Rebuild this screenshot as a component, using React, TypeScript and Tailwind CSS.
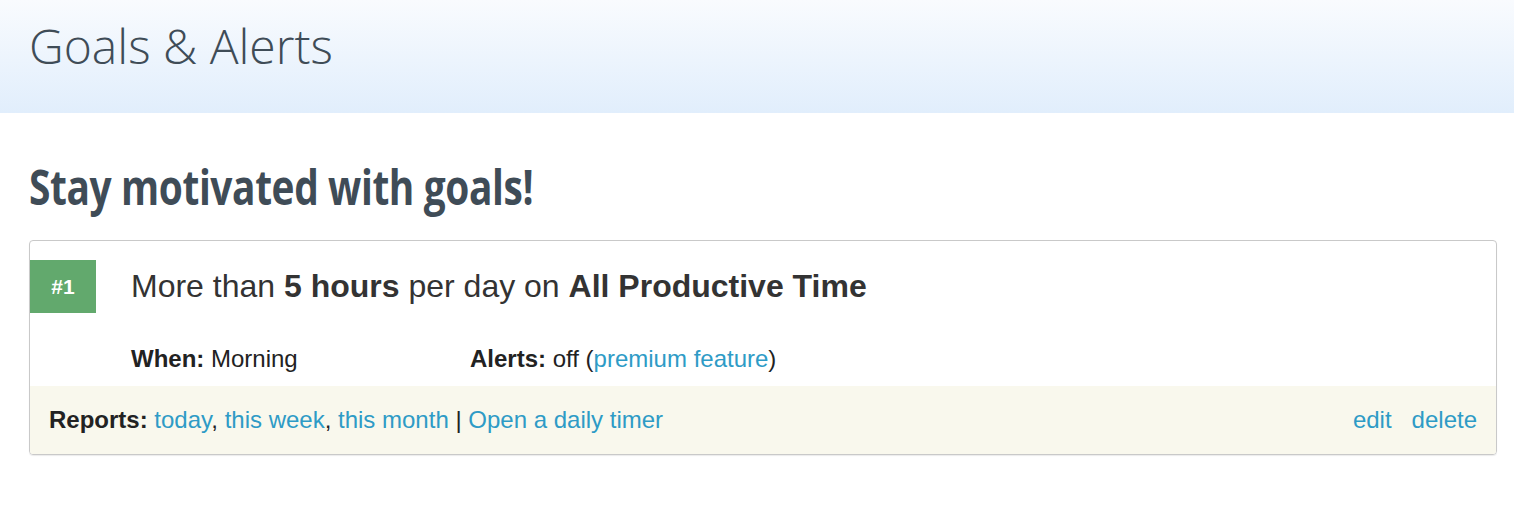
export default function App() {
  const link = 'text-[#2e9bc6] hover:underline';
  return (
    <div className="min-h-[530px] bg-white font-['Liberation_Sans',Arial,sans-serif]">
      <header className="h-[113px] bg-gradient-to-b from-[#f9fbfe] to-[#e1eefc] px-[29px] pt-[17px]">
        <h1 className="font-['Open_Sans',sans-serif] text-[48px] leading-[58px] font-light text-[#3f4c57]">
          Goals &amp; Alerts
        </h1>
      </header>

      <main className="px-[29px] pt-[48px]">
        <h2 className="origin-left scale-x-[0.81] whitespace-nowrap font-['Open_Sans',sans-serif] text-[48px] leading-[52px] font-bold tracking-[-0.5px] text-[#3f4c57]">
          Stay motivated with goals!
        </h2>

        <div className="mt-[27px] w-[1468px] overflow-hidden rounded-[4px] border border-[#c9c9c9] shadow-[0_1px_1px_rgba(0,0,0,0.08)]">
          <div className="flex items-start pt-[19px]">
            <div className="flex h-[53px] w-[66px] items-center justify-center bg-[#62a96d] text-[21px] font-bold text-white">
              #1
            </div>
            <div className="pl-[35px]">
              <p className="text-[32px] leading-[53px] text-[#333]">
                More than <b>5 hours</b> per day on <b>All Productive Time</b>
              </p>
              <div className="flex pt-[32px] pb-[13px] text-[24px] leading-[28px] text-[#222]">
                <span className="w-[339px]">
                  <b>When:</b> Morning
                </span>
                <span>
                  <b>Alerts:</b> off (<a className={link}>premium feature</a>)
                </span>
              </div>
            </div>
          </div>
          <div className="flex h-[68px] items-center justify-between bg-[#f9f8ed] px-[19px] text-[24px] text-[#222]">
            <div>
              <b>Reports:</b> <a className={link}>today</a>, <a className={link}>this week</a>,{' '}
              <a className={link}>this month</a> | <a className={link}>Open a daily timer</a>
            </div>
            <div className="flex gap-[20px]">
              <a className={link}>edit</a>
              <a className={link}>delete</a>
            </div>
          </div>
        </div>
      </main>
    </div>
  );
}
